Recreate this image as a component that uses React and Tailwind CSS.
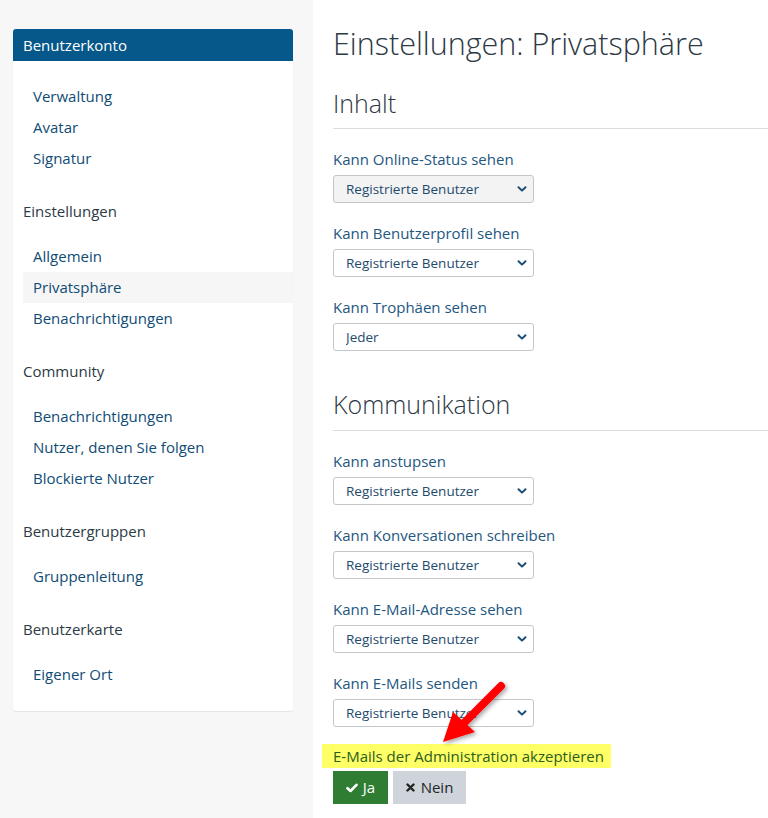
import React from 'react';

const font = { fontFamily: '"Open Sans", "Noto Sans", sans-serif' };

const menu = [
  { title: null, items: ['Verwaltung', 'Avatar', 'Signatur'] },
  { title: 'Einstellungen', items: ['Allgemein', 'Privatsphäre', 'Benachrichtigungen'] },
  { title: 'Community', items: ['Benachrichtigungen', 'Nutzer, denen Sie folgen', 'Blockierte Nutzer'] },
  { title: 'Benutzergruppen', items: ['Gruppenleitung'] },
  { title: 'Benutzerkarte', items: ['Eigener Ort'] },
];

const Chevron = () => (
  <svg width="10" height="10" viewBox="0 0 10 10" className="absolute right-[7px] top-[9px] pointer-events-none">
    <path d="M1.5 3.2 L5 6.6 L8.5 3.2" fill="none" stroke="#1b4f78" strokeWidth="2" strokeLinecap="round" strokeLinejoin="round" />
  </svg>
);

const Field = ({ label, value, active }) => (
  <div className="mt-[20px]">
    <div className="text-[15px] leading-[20px] text-[#23577f]">{label}</div>
    <div className="relative mt-[6px] w-[201px]">
      <select
        defaultValue={value}
        className={`appearance-none block w-full h-[28px] pl-[12px] pr-6 text-[13.5px] text-[#1e4a6d] border border-[#c3c7cb] rounded-[3px] ${active ? 'bg-[#f3f3f3]' : 'bg-white'}`}
        style={font}
      >
        <option>Registrierte Benutzer</option>
        <option>Jeder</option>
        <option>Niemand</option>
      </select>
      <Chevron />
    </div>
  </div>
);

export default function App() {
  return (
    <div className="flex min-h-[818px] w-[768px] overflow-hidden bg-white" style={font}>
      <aside className="w-[313px] shrink-0 bg-[#f7f7f7] pt-[29px] pl-[13px] pr-[20px]">
        <div className="bg-white rounded-[3px] shadow-[0_1px_1px_rgba(0,0,0,0.08)] pb-[21px]">
          <div className="h-[32px] bg-[#07588a] rounded-t-[3px] px-[10px] flex items-center text-white text-[15px]">
            Benutzerkonto
          </div>
          {menu.map((sec, i) => (
            <div key={i}>
              {sec.title && (
                <div className="mt-[27px] px-[10px] text-[15px] leading-[20px] text-[#2c3a45]">{sec.title}</div>
              )}
              <ul className="pt-[20px] pl-[10px]">
                {sec.items.map((it) => (
                  <li
                    key={it}
                    className={`h-[31px] flex items-center pl-[10px] text-[15px] text-[#0f4c75] ${it === 'Privatsphäre' ? 'bg-[#f6f6f6]' : ''}`}
                  >
                    {it}
                  </li>
                ))}
              </ul>
            </div>
          ))}
        </div>
      </aside>

      <main className="relative flex-1 pt-[23px] pl-[20px]">
        <h1 className="text-[30.5px] leading-[40px] font-light text-[#2c3843]">Einstellungen: Privatsphäre</h1>

        <h2 className="mt-[24px] text-[25px] leading-[32px] font-light text-[#2c3843]">Inhalt</h2>
        <div className="mt-[9px] border-t border-[#dcdcdc]" />
        <Field label="Kann Online-Status sehen" value="Registrierte Benutzer" active />
        <Field label="Kann Benutzerprofil sehen" value="Registrierte Benutzer" />
        <Field label="Kann Trophäen sehen" value="Jeder" />

        <h2 className="mt-[37px] text-[25px] leading-[32px] font-light text-[#2c3843]">Kommunikation</h2>
        <div className="mt-[10px] border-t border-[#dcdcdc]" />
        <Field label="Kann anstupsen" value="Registrierte Benutzer" />
        <Field label="Kann Konversationen schreiben" value="Registrierte Benutzer" />
        <Field label="Kann E-Mail-Adresse sehen" value="Registrierte Benutzer" />
        <Field label="Kann E-Mails senden" value="Registrierte Benutzer" />

        <div className="mt-[17px] -ml-[11px] w-[289px] h-[24px] bg-[#ffff66] pl-[11px] flex items-center text-[15px] text-[#2a5e1e]">
          E-Mails der Administration akzeptieren
        </div>
        <div className="mt-[3px] flex gap-[5px]">
          <button className="h-[33px] w-[55px] justify-center bg-[#2e7d32] text-white text-[15px] flex items-center gap-[5px]">
            <svg width="12" height="10" viewBox="0 0 12 10">
              <path d="M1.5 5.2 L4.5 8 L10.5 1.8" fill="none" stroke="white" strokeWidth="2.6" strokeLinecap="round" strokeLinejoin="round" />
            </svg>
            Ja
          </button>
          <button className="h-[33px] w-[73px] justify-center bg-[#ced4da] text-[#212529] text-[15px] flex items-center gap-[6px]">
            <svg width="9" height="9" viewBox="0 0 9 9">
              <path d="M1.5 1.5 L7.5 7.5 M7.5 1.5 L1.5 7.5" fill="none" stroke="#222" strokeWidth="2.4" strokeLinecap="round" />
            </svg>
            Nein
          </button>
        </div>

        <svg className="absolute left-[120px] top-[674px] pointer-events-none" width="90" height="80" viewBox="0 0 90 80">
          <defs>
            <filter id="sh" x="-20%" y="-20%" width="150%" height="150%">
              <feDropShadow dx="2" dy="2" stdDeviation="2" floodColor="#000" floodOpacity="0.35" />
            </filter>
          </defs>
          <g filter="url(#sh)">
            <line x1="68" y1="12" x2="30" y2="50" stroke="#ff0000" strokeWidth="8" strokeLinecap="round" />
            <polygon points="10,68 20,38 42,58" fill="#ff0000" />
          </g>
        </svg>
      </main>
    </div>
  );
}
